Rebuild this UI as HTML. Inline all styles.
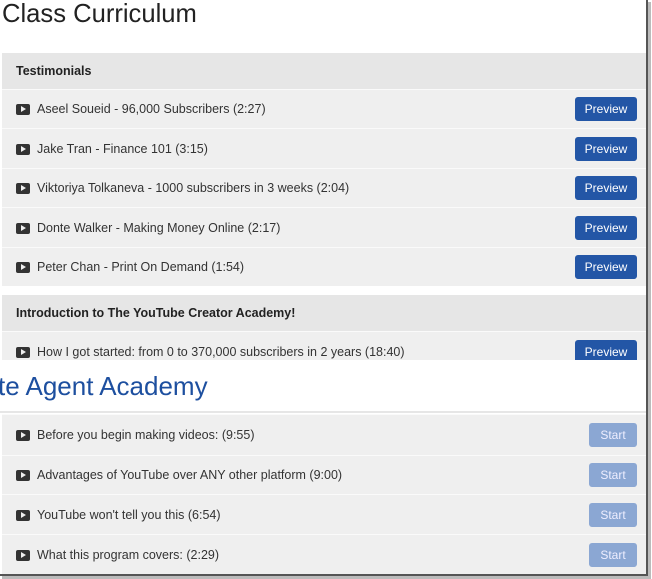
<!DOCTYPE html>
<html><head><style>
body{margin:0;width:652px;height:579px;background:#fff;font-family:"Liberation Sans",sans-serif;position:relative;overflow:hidden}
.abs{position:absolute}
.title{left:2px;top:0;font-size:25.6px;color:#222;line-height:28px}
.hdr{left:2px;width:644px;background:#e6e6e6;font-weight:bold;font-size:12.5px;color:#222;box-sizing:border-box;padding-left:14px}
.row{left:2px;width:644px;background:#efefef;border-top:1px solid #fafafa;box-sizing:border-box;font-size:12.5px;color:#333}
.row .t{position:absolute;left:35px;top:50%;transform:translateY(-50%);white-space:nowrap}
.ic{position:absolute;left:14px;top:50%;margin-top:-5px;width:14px;height:11px;background:#333;border-radius:2px}
.ic:after{content:"";position:absolute;left:5px;top:2px;border-left:5px solid #efefef;border-top:3.5px solid transparent;border-bottom:3.5px solid transparent}
.btn{position:absolute;right:9px;top:50%;margin-top:-12px;height:24px;border-radius:3px;color:#fff;font-size:12px;line-height:24px;text-align:center}
.pv{width:62px;background:#2356a6}
.st{width:48px;background:#8ba7d3;color:#eef}
</style></head><body>
<div class="abs title">Class Curriculum</div>
<div class="abs hdr" style="top:53px;height:36px;line-height:36px">Testimonials</div>
<div class="abs row" style="top:89px;height:39px"><span class="ic"></span><span class="t">Aseel Soueid - 96,000 Subscribers (2:27)</span><span class="btn pv">Preview</span></div>
<div class="abs row" style="top:128px;height:40px"><span class="ic"></span><span class="t">Jake Tran - Finance 101 (3:15)</span><span class="btn pv">Preview</span></div>
<div class="abs row" style="top:168px;height:39px"><span class="ic"></span><span class="t">Viktoriya Tolkaneva - 1000 subscribers in 3 weeks (2:04)</span><span class="btn pv">Preview</span></div>
<div class="abs row" style="top:207px;height:40px"><span class="ic"></span><span class="t">Donte Walker - Making Money Online (2:17)</span><span class="btn pv">Preview</span></div>
<div class="abs row" style="top:247px;height:39px"><span class="ic"></span><span class="t">Peter Chan - Print On Demand (1:54)</span><span class="btn pv">Preview</span></div>
<div class="abs hdr" style="top:295px;height:36px;line-height:36px">Introduction to The YouTube Creator Academy!</div>
<div class="abs row" style="top:331px;height:29px;overflow:hidden"><span class="ic" style="top:20px"></span><span class="t" style="top:20px">How I got started: from 0 to 370,000 subscribers in 2 years (18:40)</span><span class="btn pv" style="top:8px;margin-top:0">Preview</span></div>
<div class="abs" style="left:0;top:360px;width:646px;height:53px;background:#fff;border-bottom:2px solid #e6e6e6;box-sizing:border-box"></div>
<div class="abs" style="left:-2px;top:371px;font-size:26px;color:#1d4f9f">te Agent Academy</div>
<div class="abs row" style="top:414px;height:41px"><span class="ic"></span><span class="t">Before you begin making videos: (9:55)</span><span class="btn st">Start</span></div>
<div class="abs row" style="top:455px;height:39px"><span class="ic"></span><span class="t">Advantages of YouTube over ANY other platform (9:00)</span><span class="btn st">Start</span></div>
<div class="abs row" style="top:494px;height:40px"><span class="ic"></span><span class="t">YouTube won't tell you this (6:54)</span><span class="btn st">Start</span></div>
<div class="abs row" style="top:534px;height:40px"><span class="ic"></span><span class="t">What this program covers: (2:29)</span><span class="btn st">Start</span></div>
<div class="abs" style="left:646px;top:0;width:2px;height:576px;background:#555"></div>
<div class="abs" style="left:0;top:574px;width:648px;height:2px;background:#555"></div>
<div class="abs" style="left:648px;top:2px;width:3px;height:577px;background:#bbb"></div>
<div class="abs" style="left:2px;top:576px;width:649px;height:3px;background:#bbb"></div>
</body></html>
